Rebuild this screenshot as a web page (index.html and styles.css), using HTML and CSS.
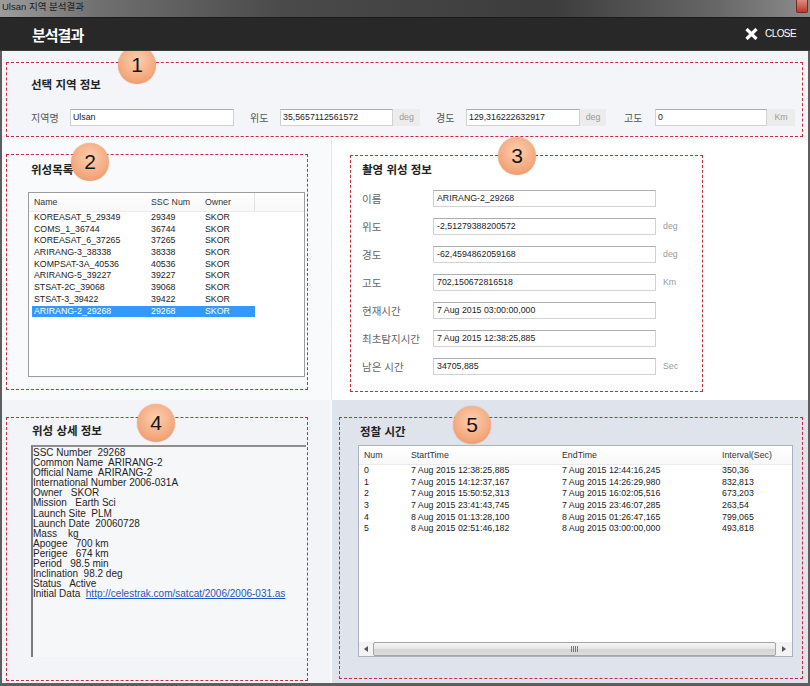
FILE: index.html
```html
<!DOCTYPE html>
<html lang="ko">
<head>
<meta charset="utf-8">
<title>Ulsan 지역 분석결과</title>
<link rel="stylesheet" href="styles.css">
</head>
<body>
<div class="window">
  <div class="titlebar">
    <span class="wtitle">Ulsan 지역 분석결과</span>
    <span class="wclose"></span>
  </div>
  <div class="header">
    <h1 class="htitle">분석결과</h1>
    <div class="closebtn">
      <svg class="xicon" width="13" height="12" viewBox="0 0 13 12"><path d="M1.5 1 L11.5 11 M11.5 1 L1.5 11" stroke="#fff" stroke-width="3.2" fill="none"/></svg>
      <span>CLOSE</span>
    </div>
  </div>
  <div class="content">
    <section class="area-top">
      <div class="dbox dbox-region">
        <span class="badge b1">1</span>
        <h2 class="stitle">선택 지역 정보</h2>
        <div class="region-row">
          <span class="lbl">지역명</span><div class="inp">Ulsan</div>
          <span class="lbl sp">위도</span><div class="inp">35,5657112561572</div><span class="unit">deg</span>
          <span class="lbl sp">경도</span><div class="inp">129,316222632917</div><span class="unit">deg</span>
          <span class="lbl sp2">고도</span><div class="inp">0</div><span class="unit">Km</span>
        </div>
      </div>
    </section>
    <div class="row row-mid">
      <section class="col-left area-list">
        <div class="dbox dbox-list">
          <span class="badge b2">2</span>
          <h2 class="stitle t-list">위성목록</h2>
          <div class="lv lv-sat">
            <div class="lv-head"><span>Name</span><span>SSC Num</span><span class="sep">Owner</span><span></span></div>
            <div class="lv-row"><span>KOREASAT_5_29349</span><span>29349</span><span>SKOR</span></div>
            <div class="lv-row"><span>COMS_1_36744</span><span>36744</span><span>SKOR</span></div>
            <div class="lv-row"><span>KOREASAT_6_37265</span><span>37265</span><span>SKOR</span></div>
            <div class="lv-row"><span>ARIRANG-3_38338</span><span>38338</span><span>SKOR</span></div>
            <div class="lv-row"><span>KOMPSAT-3A_40536</span><span>40536</span><span>SKOR</span></div>
            <div class="lv-row"><span>ARIRANG-5_39227</span><span>39227</span><span>SKOR</span></div>
            <div class="lv-row"><span>STSAT-2C_39068</span><span>39068</span><span>SKOR</span></div>
            <div class="lv-row"><span>STSAT-3_39422</span><span>39422</span><span>SKOR</span></div>
            <div class="lv-row sel"><span>ARIRANG-2_29268</span><span>29268</span><span>SKOR</span></div>
          </div>
        </div>
      </section>
      <section class="col-right area-info">
        <div class="dbox dbox-info">
          <span class="badge b3">3</span>
          <h2 class="stitle">촬영 위성 정보</h2>
          <div class="info-grid">
            <span class="lbl">이름</span><div class="inp inp-i">ARIRANG-2_29268</div><span class="unit-i"></span>
            <span class="lbl">위도</span><div class="inp inp-i">-2,51279388200572</div><span class="unit-i">deg</span>
            <span class="lbl">경도</span><div class="inp inp-i">-62,4594862059168</div><span class="unit-i">deg</span>
            <span class="lbl">고도</span><div class="inp inp-i">702,150672816518</div><span class="unit-i">Km</span>
            <span class="lbl">현재시간</span><div class="inp inp-i">7 Aug 2015 03:00:00,000</div><span class="unit-i"></span>
            <span class="lbl">최초탐지시간</span><div class="inp inp-i">7 Aug 2015 12:38:25,885</div><span class="unit-i"></span>
            <span class="lbl">남은 시간</span><div class="inp inp-i">34705,885</div><span class="unit-i">Sec</span>
          </div>
        </div>
      </section>
    </div>
    <div class="row row-bot">
      <section class="col-left area-detail">
        <div class="dbox dbox-detail">
          <span class="badge b4">4</span>
          <h2 class="stitle t-detail">위성 상세 정보</h2>
          <div class="txtbox">
            <div class="tl">SSC Number  29268</div>
            <div class="tl">Common Name  ARIRANG-2</div>
            <div class="tl">Official Name  ARIRANG-2</div>
            <div class="tl">International Number 2006-031A</div>
            <div class="tl">Owner   SKOR</div>
            <div class="tl">Mission   Earth Sci</div>
            <div class="tl">Launch Site  PLM</div>
            <div class="tl">Launch Date  20060728</div>
            <div class="tl">Mass    kg</div>
            <div class="tl">Apogee   700 km</div>
            <div class="tl">Perigee   674 km</div>
            <div class="tl">Period   98.5 min</div>
            <div class="tl">Inclination  98.2 deg</div>
            <div class="tl">Status   Active</div>
            <div class="tl"><span>Initial Data  </span><a class="lnk" href="#">http://celestrak.com/satcat/2006/2006-031.as</a></div>
          </div>
        </div>
      </section>
      <section class="col-right area-pass">
        <div class="dbox dbox-pass">
          <span class="badge b5">5</span>
          <h2 class="stitle t-pass">정찰 시간</h2>
          <div class="lv lv-pass">
            <div class="pass-head"><span>Num</span><span>StartTime</span><span>EndTime</span><span>Interval(Sec)</span></div>
            <div class="pass-rows">
              <div class="pass-row"><span>0</span><span>7 Aug 2015 12:38:25,885</span><span>7 Aug 2015 12:44:16,245</span><span>350,36</span></div>
              <div class="pass-row"><span>1</span><span>7 Aug 2015 14:12:37,167</span><span>7 Aug 2015 14:26:29,980</span><span>832,813</span></div>
              <div class="pass-row"><span>2</span><span>7 Aug 2015 15:50:52,313</span><span>7 Aug 2015 16:02:05,516</span><span>673,203</span></div>
              <div class="pass-row"><span>3</span><span>7 Aug 2015 23:41:43,745</span><span>7 Aug 2015 23:46:07,285</span><span>263,54</span></div>
              <div class="pass-row"><span>4</span><span>8 Aug 2015 01:13:28,100</span><span>8 Aug 2015 01:26:47,165</span><span>799,065</span></div>
              <div class="pass-row"><span>5</span><span>8 Aug 2015 02:51:46,182</span><span>8 Aug 2015 03:00:00,000</span><span>493,818</span></div>
            </div>
            <div class="hscroll">
              <div class="sb-arrow"><svg width="4" height="6" viewBox="0 0 4 6"><path d="M4 0 L0 3 L4 6 Z" fill="#555"/></svg></div>
              <div class="sb-thumb"><span class="grip"></span></div>
              <div class="sb-arrow r"><svg width="4" height="6" viewBox="0 0 4 6"><path d="M0 0 L4 3 L0 6 Z" fill="#555"/></svg></div>
            </div>
          </div>
        </div>
      </section>
    </div>
  </div>
</div>
</body>
</html>
```

FILE: styles.css
```css
* { box-sizing: border-box; margin: 0; padding: 0; }
html, body { width: 810px; height: 686px; overflow: hidden; background: #fff; }
body { font-family: "Liberation Sans", "Noto Sans CJK KR", sans-serif; color: #222; }

.window { width: 810px; height: 686px; display: flex; flex-direction: column; }

/* window title bar */
.titlebar {
  height: 17px; flex: none; display: flex; justify-content: space-between; align-items: flex-start;
  padding-left: 2px;
  background: linear-gradient(to right, #9c9c9c 0%, #707070 12%, #4a4a4a 35%, #3c3c3c 68%, #666 88%, #8c8c8c 100%);
}
.wtitle { font: 9.5px/14px "Liberation Sans", "Noto Sans CJK KR", sans-serif; color: #1c1c1c; }
.wclose {
  width: 12px; height: 13px; margin-right: 2px;
  background: linear-gradient(#e08a7c, #b83a2c);
  border: 1px solid #7a2a20; border-top: none; border-radius: 0 0 2px 2px;
}

/* dark header */
.header {
  position: relative; z-index: 2;
  height: 34px; flex: none; display: flex; align-items: center; justify-content: space-between;
  padding: 0 14px 0 32px;
  background: #282828; border-top: 1px solid #1b1b1b; border-bottom: 1px solid #33402f;
}
.htitle { font: bold 15px/1 "Noto Sans CJK KR", sans-serif; color: #fff; letter-spacing: -1px; }
.closebtn { display: flex; align-items: center; gap: 7px; color: #fff; font: 10px/1 "Liberation Sans", sans-serif; letter-spacing: -0.6px; }
.xicon { display: block; }

/* body frame */
.content {
  flex: 1; display: flex; flex-direction: column;
  border-left: 2px solid #5e5e5e; border-right: 2px solid #5e5e5e; border-bottom: 3px solid #5e5e5e;
}
.area-top { height: 89px; flex: none; background: #f4f5f9; padding: 11px 5px 0 4px; }
.row { display: flex; flex: none; }
.row-mid { height: 260px; }
.row-bot { flex: 1; }
.col-left { width: 330px; flex: none; }
.col-right { flex: 1; }
.area-list { background: #f9fafb; border-right: 1px solid #e3e6ea; padding: 14px 0 0 4px; }
.area-info { background: #fff; padding: 15px 0 0 18px; }
.area-detail { background: #f2f4f8; border-right: 2px solid #fbfbfc; padding: 17px 0 0 4px; }
.area-pass { background: #dee3ec; padding: 17px 0 0 7px; }

/* dashed annotation boxes */
.dbox { position: relative; border: 1px dashed #c92a3e; }
.dbox-region { height: 75px; padding: 13px 0 0 24px; }
.dbox-list { width: 302px; height: 236px; padding: 6px 0 0 21px; }
.dbox-info { width: 353px; height: 237px; padding: 5px 0 0 11px; }
.dbox-detail { width: 302px; height: 264px; padding: 4px 0 0 24px; }
.dbox-pass { width: 464px; height: 262px; padding: 5px 0 0 18px; }

.stitle { font: bold 11.5px/16px "Noto Sans CJK KR", sans-serif; color: #222; }
.t-list { padding-left: 3px; }
.t-detail { padding-left: 1px; }
.t-pass { padding-left: 2px; }

/* numbered badges */
.badge {
  position: absolute; z-index: 1; width: 38px; height: 38px; border-radius: 50%;
  background: radial-gradient(circle at 50% 38%, #fccfb0 0%, #f5ab80 58%, #e78e5d 100%);
  box-shadow: 0 0 1px rgba(140, 70, 30, .6);
  font: 21px/38px "Liberation Sans", sans-serif; text-align: center; color: #151515;
}
.b1 { left: 111px; top: -17px; }
.b2 { left: 64px; top: -12px; }
.b3 { left: 147px; top: -19px; }
.b4 { left: 130px; top: -14px; }
.b5 { left: 113px; top: -12px; }

/* form fields */
.lbl { font: 10px/17px "Noto Sans CJK KR", sans-serif; color: #555; white-space: nowrap; }
.lbl.sp { padding-left: 16px; }
.lbl.sp2 { padding-left: 18px; }
.inp {
  height: 17px; background: #fff; border: 1px solid #d2d2d2; border-top-color: #adadad;
  font: 8.8px/15px "Liberation Sans", sans-serif; color: #222; padding-left: 2px;
  white-space: nowrap; overflow: hidden;
}
.unit { height: 17px; background: #ececec; font: 8.8px/17px "Liberation Sans", sans-serif; color: #9a9a9a; text-align: center; }

.region-row {
  display: grid; height: 17px; margin-top: 17px; align-items: center;
  grid-template-columns: 39px 164px 46px 113px 27px 46px 114px 26px 49px 112px 28px;
}

.info-grid {
  display: grid; grid-template-columns: 71px 223px auto; row-gap: 11px;
  margin-top: 13px; align-items: center;
}
.info-grid .lbl { font-size: 10.5px; color: #666; }
.inp-i { padding-left: 3px; }
.unit-i { font: 8.8px/17px "Liberation Sans", sans-serif; color: #999; padding-left: 7px; }

/* list views */
.lv { background: #fff; border: 1px solid #9c9c9c; font: 8.8px "Liberation Sans", sans-serif; color: #222; overflow: hidden; }
.lv-sat { width: 277px; height: 185px; margin-top: 15px; }
.lv-head {
  height: 19px; display: grid; grid-template-columns: 117px 54px 52px 1fr; padding-left: 3px;
  border-bottom: 1px solid #ececec; background: linear-gradient(#fff, #f8f8f8);
}
.lv-head span { line-height: 18px; padding-left: 2px; color: #333; }
.lv-head .sep { border-right: 1px solid #e2e2e2; }
.lv-row { display: grid; grid-template-columns: 117px 54px 52px; width: 223px; margin-left: 3px; height: 11.7px; line-height: 11.7px; }
.lv-row span { padding-left: 2px; white-space: nowrap; }
.lv-row.sel { background: #3399ff; color: #fff; }

.lv-pass { width: 435px; height: 212px; margin-top: 6px; display: flex; flex-direction: column; border-color: #aab2c0; }
.pass-head {
  height: 19px; flex: none; display: grid; grid-template-columns: 47px 151px 160px 1fr;
  border-bottom: 1px solid #ececec; background: linear-gradient(#fff, #f8f8f8);
}
.pass-head span { line-height: 18px; padding-left: 5px; color: #333; }
.pass-rows { flex: 1; }
.pass-row { display: grid; grid-template-columns: 47px 151px 160px 1fr; height: 11.7px; line-height: 11.7px; }
.pass-row span { padding-left: 5px; white-space: nowrap; }

.hscroll { height: 14px; flex: none; display: flex; background: #f3f3f3; }
.sb-arrow { width: 14px; display: flex; align-items: center; justify-content: center; }
.sb-arrow.r { width: 16px; }
.sb-thumb {
  flex: 1; display: flex; align-items: center; justify-content: center;
  border: 1px solid #a5a5a5; border-radius: 2px;
  background: linear-gradient(#f5f5f5, #e6e6e6 50%, #d4d4d4 51%, #dcdcdc);
}
.grip { width: 7px; height: 6px; background: repeating-linear-gradient(to right, #777 0 1px, transparent 1px 2px); }

/* detail text box */
.txtbox {
  width: 275px; height: 212px; margin-top: 7px;
  background: #f6f7f9; border-top: 2px solid #8e8e8e; border-left: 2px solid #7c7c7c;
  padding-top: 1px; font: 10px/10.1px "Liberation Sans", sans-serif; color: #1e1e1e;
  overflow: hidden;
}
.tl { height: 10.1px; white-space: pre; }
.lnk { color: #1f55c6; text-decoration: underline; }
```
